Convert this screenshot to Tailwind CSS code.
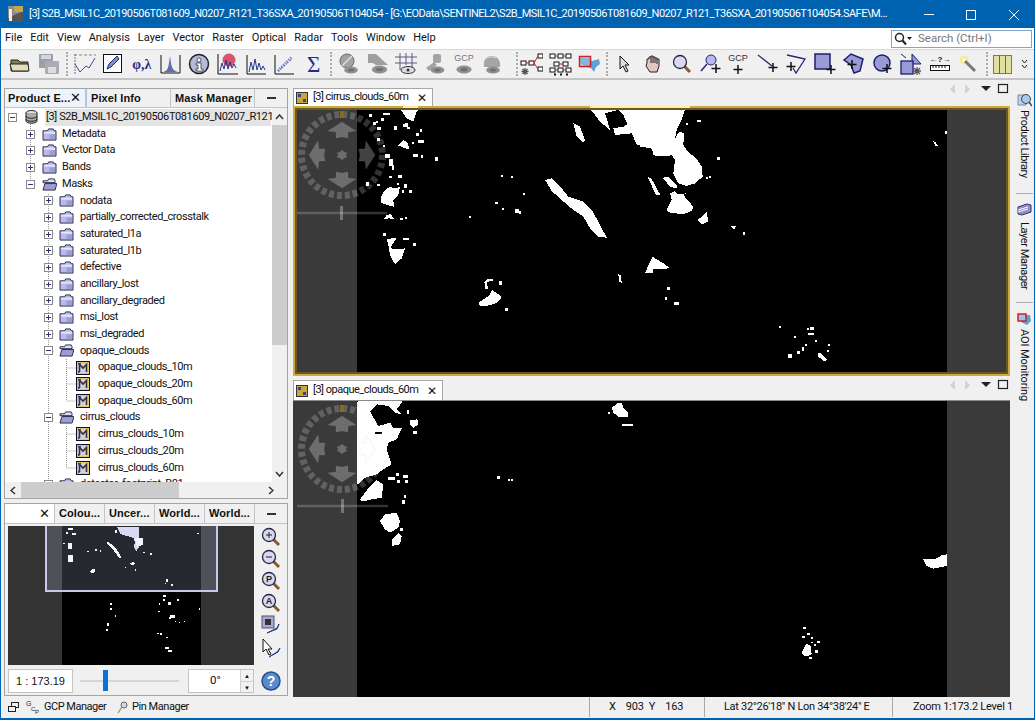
<!DOCTYPE html>
<html lang="en">
<head>
<meta charset="UTF-8">
<title>SNAP</title>
<script src="https://cdn.jsdelivr.net/npm/@tailwindcss/browser@4"></script>
</head>
<body class="bg-[#f0f0f0]">
<!-- shared icons -->
<svg class="hidden">
  <symbol id="folder" viewBox="0 0 16 14"><path d="M1 3h5l1-2h5l1 2h2v10H1z" fill="#b9b9ee" stroke="#25253f"/><path d="M2 4h12v2H2z" fill="#e6e6fa"/><path d="M8 7h6v5H8z" fill="#9d9dd4"/></symbol>
  <symbol id="folder-open" viewBox="0 0 16 14"><path d="M1 3h5l1-2h6l1 2v2H1z" fill="#dcdcf5" stroke="#25253f"/><path d="M3 6h13l-2 7H1z" fill="#9d9dd8" stroke="#25253f"/></symbol>
  <symbol id="mask" viewBox="0 0 14 14"><rect x=".5" y=".5" width="13" height="13" fill="#e8c76a" stroke="#111"/><rect x="2" y="2" width="10" height="10" fill="#cfd0e4"/><path d="M3.500 11V3.500L7 7l3.500-3.500V11" fill="none" stroke="#333" stroke-width="1.600"/><path d="M2 2h3v1.500H2zM2 10h1.500v2H2z" fill="#2b3a9c"/></symbol>
  <symbol id="plus" viewBox="0 0 9 9"><rect x=".5" y=".5" width="8" height="8" fill="#fff" stroke="#8a8a8a"/><path d="M2 4.500h5M4.500 2v5" stroke="#33337a"/></symbol>
  <symbol id="minus" viewBox="0 0 9 9"><rect x=".5" y=".5" width="8" height="8" fill="#fff" stroke="#8a8a8a"/><path d="M2 4.500h5" stroke="#33337a"/></symbol>
  <symbol id="eye" viewBox="0 0 18 10"><ellipse cx="9" cy="5" rx="8.500" ry="4.500" fill="#8f8f8f"/><ellipse cx="9" cy="5" rx="4" ry="2" fill="#6f6f6f"/></symbol>
  <symbol id="lens" viewBox="0 0 20 20"><path d="M12 12l6 6" stroke="#8a5a2a" stroke-width="3"/><circle cx="8" cy="8" r="6.500" fill="#d8d8ee" stroke="#26264a" stroke-width="1.300"/></symbol>
  <symbol id="nav" viewBox="-46 -46 92 92">
    <circle r="40.500" fill="none" stroke="#fff" stroke-opacity=".2" stroke-width="7" stroke-dasharray="5 2.950"/>
    <path d="M-2 -44h4v7h-4z" fill="#8a6d1c"/>
    <g fill="#fff" fill-opacity=".26" stroke="#aaa" stroke-opacity=".2" stroke-width=".6">
      <path d="M0-33L14-24 6-23V-17L0-18-6-17V-23L-14-24Z"/>
      <path d="M33 0L24 14 23 6H17L18 0 17-6H23L24-14Z"/>
      <path d="M0 33L14 24 6 23V17L0 18-6 17V23L-14 24Z"/>
      <path d="M-33 0L-24 14-23 6H-17L-18 0-17-6H-23L-24-14Z"/>
      <path d="M0-5L2-3 5-2 3.500 0 5 2 2 3 0 5-2 3-5 2-3.500 0-5-2-2-3Z"/>
    </g>
  </symbol>
</svg>

<div class="w-[1035px] h-[720px] flex flex-col overflow-hidden border-x border-b-2 border-[#0063b1] text-[#111] font-['Roboto',sans-serif] relative">

  <!-- title bar -->
  <header class="h-[28px] shrink-0 bg-[#0063b1] text-white flex items-center -mx-px">
    <svg class="ml-[8px] w-[15px] h-[16px]" viewBox="0 0 15 16"><rect width="15" height="16" fill="#555"/><path d="M0 0h15v5L0 12z" fill="#8c8c8c"/><path d="M6 0h9v6H6z" fill="#c9a64a"/><path d="M1 15V3h3v12z" fill="#eee"/></svg>
    <span class="ml-[6px] text-[11px] tracking-[-0.5px] whitespace-nowrap">[3] S2B_MSIL1C_20190506T081609_N0207_R121_T36SXA_20190506T104054 - [G:\EOData\SENTINEL2\S2B_MSIL1C_20190506T081609_N0207_R121_T36SXA_20190506T104054.SAFE\M...</span>
    <svg class="absolute left-[923px] top-[9px] w-[100px] h-[12px]" viewBox="0 0 100 12" fill="none" stroke="#fff"><path d="M0 5.500h10"/><rect x="42.500" y="1.500" width="9" height="9"/><path d="M85 1l10 10M95 1L85 11"/></svg>
  </header>

  <!-- menu bar -->
  <nav class="h-[22px] shrink-0 bg-white flex items-center pl-[4px] text-[11px] gap-[8px] border-b border-[#d8d8d8]">
    <span>File</span><span>Edit</span><span>View</span><span>Analysis</span><span>Layer</span><span>Vector</span><span>Raster</span><span>Optical</span><span>Radar</span><span>Tools</span><span>Window</span><span>Help</span>
    <div class="absolute left-[890px] top-[30px] w-[141px] h-[18px] border border-[#7ea6cc] bg-white flex items-center text-[11.5px] text-[#777]">
      <svg class="ml-[2px] w-[18px] h-[14px]" viewBox="0 0 18 14"><circle cx="5.500" cy="5.500" r="4" fill="#fff" stroke="#222" stroke-width="1.500"/><path d="M8.500 8.500l3.500 4" stroke="#222" stroke-width="2"/><path d="M13 5h5l-2.500 3z" fill="#222"/></svg>
      <span class="ml-[6px]">Search (Ctrl+I)</span>
    </div>
  </nav>

  <!-- tool bar -->
  <div class="h-[30px] shrink-0 flex items-center pl-[5px] border-b-2 border-[#c4c4c4] bg-[#f0f0f0]">
    <span class="w-[29px] flex justify-center"><svg class="w-[22px] h-[22px]" viewBox="0 0 22 22"><path d="M2 7h7l2 2h8v9H2z" fill="#8a7a55" stroke="#222"/><path d="M1 11h18l1 7H3z" fill="#e9dcb8" stroke="#222"/></svg></span>
    <span class="w-[29px] flex justify-center"><svg class="w-[22px] h-[22px]" viewBox="0 0 22 22"><rect x="1" y="1" width="14" height="14" rx="1" fill="#9aa0a8"/><rect x="3" y="2" width="10" height="4" fill="#d4d6da"/><rect x="7" y="8" width="14" height="13" rx="1" fill="#a9adb3"/><rect x="10" y="14" width="8" height="6" fill="#dcdde0"/></svg></span>
    <span class="w-[7px] h-[24px] flex justify-center"><i class="border-l-2 border-dotted border-[#aaa]"></i></span>
    <span class="w-[29px] flex justify-center"><svg class="w-[22px] h-[22px]" viewBox="0 0 22 22" fill="none"><path d="M0 2h22" stroke="#888" stroke-dasharray="3 2"/><path d="M1 1v20" stroke="#777" stroke-dasharray="2 1"/><path d="M1 11l5 8 6-6 3 2 6-10" stroke="#33558a"/></svg></span>
    <span class="w-[29px] flex justify-center"><svg class="w-[21px] h-[21px]" viewBox="0 0 21 21"><rect x=".5" y=".5" width="18" height="18" fill="#fff" stroke="#111"/><path d="M4 15l2-5 8-8 2 3-8 8z" fill="#7f8cc8" stroke="#1c2b7a"/></svg></span>
    <span class="w-[29px] text-center text-[#1f2f8c] text-[14px] font-bold font-['Liberation_Serif',serif]">φ,λ</span>
    <span class="w-[29px] flex justify-center"><svg class="w-[21px] h-[21px]" viewBox="0 0 21 21"><path d="M1 1v18h19M20 1v18" fill="none" stroke="#111"/><path d="M3 18c4-1 5-3 6-9l1-7 1 7c1 6 3 8 7 9z" fill="#5f6bb2"/></svg></span>
    <span class="w-[29px] flex justify-center"><svg class="w-[22px] h-[22px]" viewBox="0 0 22 22"><circle cx="11" cy="11" r="9.500" fill="#b7b9dc" stroke="#222" stroke-width="1.500"/><circle cx="11" cy="7" r="2" fill="#fff" stroke="#222" stroke-width=".7"/><path d="M8 10h5v6h2v2H8v-2h2v-4H8z" fill="#fff" stroke="#222" stroke-width=".7"/></svg></span>
    <span class="w-[29px] flex justify-center"><svg class="w-[22px] h-[22px]" viewBox="0 0 22 22"><circle cx="12" cy="7" r="6.500" fill="#d9566a"/><path d="M1 1v20h20" fill="none" stroke="#111"/><path d="M3 18l2-8 2 6 2-9 2 9 2-7 2 6 2-4 2 4" fill="none" stroke="#27358f"/></svg></span>
    <span class="w-[29px] flex justify-center"><svg class="w-[21px] h-[21px]" viewBox="0 0 21 21"><path d="M1 1v19h19" fill="none" stroke="#111"/><path d="M3 18l2-10 2 8 2-11 2 11 2-7 2 7 2-4 2 4" fill="none" stroke="#27358f"/></svg></span>
    <span class="w-[29px] flex justify-center"><svg class="w-[21px] h-[21px]" viewBox="0 0 21 21"><path d="M1 1v19h19" fill="none" stroke="#111"/><path d="M4 17L18 3" stroke="#7f8cc8" stroke-width="3" stroke-dasharray="1.500 1"/><path d="M4 17L18 5" stroke="#27358f" stroke-dasharray="1 3"/></svg></span>
    <span class="w-[29px] text-center text-[#1f2f8c] text-[23px] leading-none font-['Liberation_Serif',serif]">Σ</span>
    <span class="w-[7px] h-[24px] flex justify-center"><i class="border-l-2 border-dotted border-[#aaa]"></i></span>
    <span class="w-[29px] flex justify-center"><svg class="w-[22px] h-[22px]" viewBox="0 0 22 22"><circle cx="9" cy="8" r="7" fill="#a2a2a2" stroke="#666"/><path d="M4 13L14 3" stroke="#ddd" stroke-width="1.500"/><use href="#eye" x="5" y="13" width="16" height="8"/></svg></span>
    <span class="w-[29px] flex justify-center"><svg class="w-[22px] h-[22px]" viewBox="0 0 22 22"><path d="M1 1h8l12 11H9L6 10H1z" fill="#9e9e9e"/><use href="#eye" x="4" y="12" width="17" height="9"/></svg></span>
    <span class="w-[29px] flex justify-center"><svg class="w-[22px] h-[22px]" viewBox="0 0 22 22"><path d="M5 0v17M11 0v12M17 0v17M0 4h22M0 10h22" stroke="#5a5a82"/><ellipse cx="13" cy="17" rx="7" ry="3.500" fill="#ddd" stroke="#333"/><circle cx="13" cy="17" r="1.500" fill="#333"/></svg></span>
    <span class="w-[29px] flex justify-center"><svg class="w-[22px] h-[22px]" viewBox="0 0 22 22"><rect x="9" y="1" width="8" height="9" rx="2" fill="#a3a3a3"/><path d="M2 15l8-6 3 3-8 6z" fill="#a3a3a3"/><use href="#eye" x="6" y="13" width="15" height="8"/></svg></span>
    <span class="w-[29px] flex justify-center"><svg class="w-[24px] h-[24px]" viewBox="0 0 24 24"><text x="12" y="9" text-anchor="middle" font-size="9" fill="#777" font-family="Liberation Sans">GCP</text><use href="#eye" x="4" y="13" width="16" height="9"/></svg></span>
    <span class="w-[29px] flex justify-center"><svg class="w-[22px] h-[22px]" viewBox="0 0 22 22"><path d="M3 14c-1-8 3-11 8-11s9 4 8 11z" fill="#a5a5a5"/><path d="M5 6c2-2 5-3 10-1" fill="none" stroke="#dcdcdc"/><use href="#eye" x="4" y="13" width="16" height="8"/></svg></span>
    <span class="w-[7px] h-[24px] ml-[7px] mr-[-3px] flex justify-center"><i class="border-l-2 border-dotted border-[#aaa]"></i></span>
    <span class="w-[29px] flex justify-center"><svg class="w-[23px] h-[23px]" viewBox="0 0 23 23"><rect x="1" y="8" width="5" height="4" fill="#fff" stroke="#111"/><rect x="9" y="8" width="5" height="4" fill="#fff" stroke="#111"/><rect x="18" y="1" width="5" height="4" fill="#fff" stroke="#111"/><rect x="18" y="14" width="5" height="4" fill="#fff" stroke="#111"/><path d="M6 10h3M14 10l4-7M14 10l4 6" stroke="#c22" fill="none"/><path d="M5 15v7M1.500 18.500h7M2.500 16l5 5M7.500 16l-5 5" stroke="#555" stroke-width="1.300"/></svg></span>
    <span class="w-[29px] flex justify-center"><svg class="w-[23px] h-[23px]" viewBox="0 0 23 23" fill="#fff" stroke="#111"><rect x="1" y="1" width="5" height="4"/><rect x="9" y="1" width="5" height="4"/><rect x="17" y="1" width="5" height="4"/><rect x="5" y="9" width="5" height="4"/><rect x="14" y="9" width="5" height="4"/><rect x="1" y="15" width="5" height="4"/><rect x="9" y="15" width="5" height="4"/><rect x="17" y="15" width="5" height="4"/><path d="M6 3h3M14 3h3M10 11h4M6 17h3M14 17h3" stroke="#c22"/><path d="M5 21.500h2M11 21.500h2M17 21.500h2" stroke-width="2"/></svg></span>
    <span class="w-[29px] flex justify-center"><svg class="w-[23px] h-[20px]" viewBox="0 0 23 20"><path d="M2 4h8l4 3 7-2 1 5-4 3-2 5-3-4-5-1-5-3z" fill="#5aa2d8"/><rect x="1.500" y="2.500" width="11" height="10" fill="#9cc4e6" fill-opacity=".6" stroke="#cc2222" stroke-width="1.500"/></svg></span>
    <span class="w-[7px] h-[24px] flex justify-center"><i class="border-l-2 border-dotted border-[#aaa]"></i></span>
    <span class="w-[29px] flex justify-center"><svg class="w-[14px] h-[18px]" viewBox="0 0 14 18"><path d="M2 1v13l3-3 3 6 2-1-3-6h4z" fill="#ddd" stroke="#111"/></svg></span>
    <span class="w-[29px] flex justify-center"><svg class="w-[18px] h-[20px]" viewBox="0 0 18 20"><path d="M3 9V5h2V3h2V2h2v1h2v1h2v1h2v7l-2 6H6L2 12z" fill="#e0c8c0" stroke="#222"/><path d="M7 3v6M9 3v6M11 4v5M13 5v5" stroke="#222"/></svg></span>
    <span class="w-[29px] flex justify-center"><svg class="w-[20px] h-[20px]"><use href="#lens" width="20" height="20"/></svg></span>
    <span class="w-[29px] flex justify-center"><svg class="w-[22px] h-[20px]" viewBox="0 0 22 20"><circle cx="11" cy="6" r="5" fill="#b9b9ee" stroke="#26267a"/><path d="M7 10l-6 7" stroke="#26267a" stroke-width="1.500"/><path d="M16 10v9M11.500 14.500h9" stroke="#111" stroke-width="1.500"/></svg></span>
    <span class="w-[29px] flex justify-center"><svg class="w-[24px] h-[24px]" viewBox="0 0 24 24"><text x="11" y="9" text-anchor="middle" font-size="9" fill="#333" font-family="Liberation Sans">GCP</text><path d="M11 13v9M6.500 17.500h9" stroke="#111" stroke-width="1.500"/></svg></span>
    <span class="w-[29px] flex justify-center"><svg class="w-[22px] h-[20px]" viewBox="0 0 22 20"><path d="M1 1l14 11" stroke="#26267a" stroke-width="1.300"/><path d="M16 9v9M11.500 13.500h9" stroke="#111" stroke-width="1.500"/></svg></span>
    <span class="w-[29px] flex justify-center"><svg class="w-[22px] h-[22px]" viewBox="0 0 22 22" fill="none"><path d="M1 2l18 4-9 14-3-5" stroke="#26267a" stroke-width="1.300"/><path d="M5 9v9M.5 13.500h9" stroke="#111" stroke-width="1.500"/></svg></span>
    <span class="w-[29px] flex justify-center"><svg class="w-[22px] h-[22px]" viewBox="0 0 22 22"><rect x="1" y="1" width="15" height="15" fill="#9a9ad6" stroke="#1d1d70" stroke-width="1.500"/><path d="M17 12v9M12.500 16.500h9" stroke="#111" stroke-width="1.500"/></svg></span>
    <span class="w-[29px] flex justify-center"><svg class="w-[22px] h-[22px]" viewBox="0 0 22 22"><path d="M1 7l7-6 12 5-3 12-6 2-3-8z" fill="#9a9ad6" stroke="#1d1d70" stroke-width="1.500"/><path d="M9 7v9M4.500 11.500h9" stroke="#111" stroke-width="1.500"/></svg></span>
    <span class="w-[29px] flex justify-center"><svg class="w-[22px] h-[22px]" viewBox="0 0 22 22"><circle cx="10" cy="10" r="8" fill="#9a9ad6" stroke="#1d1d70" stroke-width="1.500"/><path d="M15 11v9M10.500 15.500h9" stroke="#111" stroke-width="1.500"/></svg></span>
    <span class="w-[29px] flex justify-center"><svg class="w-[23px] h-[23px]" viewBox="0 0 23 23"><path d="M12 1l9 10h-9z" fill="#9a9ad6" stroke="#1d1d70"/><rect x="1" y="8" width="12" height="13" fill="#9a9ad6" stroke="#1d1d70" stroke-width="1.300"/><path d="M1 1l5 4" stroke="#1d1d70"/><path d="M17 14v8M13 18h8M14 15l6 6M20 15l-6 6" stroke="#555" stroke-width="1.300"/></svg></span>
    <span class="w-[29px] flex justify-center"><svg class="w-[20px] h-[18px]" viewBox="0 0 20 18"><text x="10" y="7" text-anchor="middle" font-size="8" font-weight="700" fill="#111" font-family="Liberation Sans">←?→</text><rect x=".5" y="10.500" width="19" height="5" fill="#fff" stroke="#111"/><path d="M3 11v2M6 11v2M9 11v2M12 11v2M15 11v2" stroke="#111"/></svg></span>
    <span class="w-[29px] flex justify-center"><svg class="w-[18px] h-[18px]" viewBox="0 0 18 18"><circle cx="5" cy="5" r="4.500" fill="#f8ec9c"/><path d="M6 6l10 10" stroke="#777" stroke-width="3"/><circle cx="5" cy="5" r="1.500" fill="#fff"/></svg></span>
    <span class="w-[7px] h-[24px] ml-[1px] flex justify-center"><i class="border-l-2 border-dotted border-[#aaa]"></i></span>
    <span class="w-[24px] flex justify-center"><svg class="w-[19px] h-[19px]" viewBox="0 0 19 19"><rect x=".5" y=".5" width="18" height="18" fill="#e2e0a0" stroke="#777"/><path d="M6.500 0v19M12.500 0v19" stroke="#666"/></svg></span>
    <span class="w-[20px] flex justify-center"><svg class="w-[7px] h-[10px]" viewBox="0 0 7 10" fill="none" stroke="#222"><path d="M1 1l2.500 3L6 1M1 6l2.500 3L6 6"/></svg></span>
  </div>

  <!-- main -->
  <main class="flex-1 min-h-0 flex">

    <!-- left column -->
    <section class="w-[284px] ml-[3px] mt-[8px] flex flex-col gap-[4px] shrink-0">
      <div class="h-[411px] border border-[#a4a4a4] bg-white flex flex-col">
        <div class="h-[19px] shrink-0 flex bg-[#f0f0f0] text-[11px] font-bold font-['Liberation_Sans',sans-serif] tracking-[0.1px] whitespace-nowrap border-b border-[#c4c4c4]">
          <div class="w-[82px] flex items-center justify-between pl-[3px] pr-[5px] bg-[#eef4fa] border-r-2 border-[#a9c8e6]">Product E...<span class="font-normal text-[13px]">✕</span></div>
          <div class="w-[84px] flex items-center pl-[4px] border-r border-[#c4c4c4]">Pixel Info</div>
          <div class="w-[84px] flex items-center pl-[4px] border-r border-[#c4c4c4]">Mask Manager</div>
          <div class="flex-1 flex items-center justify-center"><i class="w-[9px] h-[2px] bg-[#333]"></i></div>
        </div>
        <div class="flex-1 min-h-0 flex flex-col">
          <div class="flex-1 min-h-0 flex">
            <div class="flex-1 min-w-0 overflow-hidden relative text-[11px] tracking-[-0.4px]">
              <!-- dotted tree lines -->
              <svg class="absolute left-0 top-[1px] w-[266px] h-[375px]" viewBox="0 0 266 375" fill="none" stroke="#999" stroke-dasharray="1 1">
                <path d="M25.500 15v60M25.500 25h6M25.500 42h6M25.500 58h6M25.500 75h6M43.500 85v290M43.500 92h6M43.500 109h6M43.500 125h6M43.500 142h6M43.500 159h6M43.500 175h6M43.500 192h6M43.500 209h6M43.500 225h6M43.500 242h6M43.500 309h6M61.500 250v42M61.500 259h9M61.500 275h9M61.500 292h9M61.500 317v42M61.500 325h9M61.500 342h9M61.500 359h9"/>
              </svg>
              <div class="relative flex flex-col pt-[1px]">
                <div class="h-[16.7px] flex items-center pl-[3px]"><svg class="w-[9px] h-[9px]"><use href="#minus"/></svg><svg class="ml-[8px] w-[13px] h-[14px]" viewBox="0 0 13 14"><ellipse cx="6.500" cy="3" rx="5.500" ry="2.500" fill="#ddd" stroke="#222"/><path d="M1 3v8c0 3 11 3 11 0V3" fill="#aaa" stroke="#222"/><path d="M1 6c0 3 11 3 11 0M1 9c0 3 11 3 11 0" fill="none" stroke="#222"/></svg><span class="ml-[7px] w-[226px] bg-[#e4e4e4] pl-[1px] whitespace-nowrap">[3] S2B_MSIL1C_20190506T081609_N0207_R121_</span></div>
                <div class="h-[16.7px] flex items-center pl-[21px]"><svg class="w-[9px] h-[9px]"><use href="#plus"/></svg><svg class="ml-[7px] w-[15px] h-[13px]"><use href="#folder"/></svg><span class="ml-[5px]">Metadata</span></div>
                <div class="h-[16.7px] flex items-center pl-[21px]"><svg class="w-[9px] h-[9px]"><use href="#plus"/></svg><svg class="ml-[7px] w-[15px] h-[13px]"><use href="#folder"/></svg><span class="ml-[5px]">Vector Data</span></div>
                <div class="h-[16.7px] flex items-center pl-[21px]"><svg class="w-[9px] h-[9px]"><use href="#plus"/></svg><svg class="ml-[7px] w-[15px] h-[13px]"><use href="#folder"/></svg><span class="ml-[5px]">Bands</span></div>
                <div class="h-[16.7px] flex items-center pl-[21px]"><svg class="w-[9px] h-[9px]"><use href="#minus"/></svg><svg class="ml-[7px] w-[15px] h-[13px]"><use href="#folder-open"/></svg><span class="ml-[5px]">Masks</span></div>
                <div class="h-[16.7px] flex items-center pl-[39px]"><svg class="w-[9px] h-[9px]"><use href="#plus"/></svg><svg class="ml-[6px] w-[15px] h-[13px]"><use href="#folder"/></svg><span class="ml-[6px]">nodata</span></div>
                <div class="h-[16.7px] flex items-center pl-[39px]"><svg class="w-[9px] h-[9px]"><use href="#plus"/></svg><svg class="ml-[6px] w-[15px] h-[13px]"><use href="#folder"/></svg><span class="ml-[6px]">partially_corrected_crosstalk</span></div>
                <div class="h-[16.7px] flex items-center pl-[39px]"><svg class="w-[9px] h-[9px]"><use href="#plus"/></svg><svg class="ml-[6px] w-[15px] h-[13px]"><use href="#folder"/></svg><span class="ml-[6px]">saturated_l1a</span></div>
                <div class="h-[16.7px] flex items-center pl-[39px]"><svg class="w-[9px] h-[9px]"><use href="#plus"/></svg><svg class="ml-[6px] w-[15px] h-[13px]"><use href="#folder"/></svg><span class="ml-[6px]">saturated_l1b</span></div>
                <div class="h-[16.7px] flex items-center pl-[39px]"><svg class="w-[9px] h-[9px]"><use href="#plus"/></svg><svg class="ml-[6px] w-[15px] h-[13px]"><use href="#folder"/></svg><span class="ml-[6px]">defective</span></div>
                <div class="h-[16.7px] flex items-center pl-[39px]"><svg class="w-[9px] h-[9px]"><use href="#plus"/></svg><svg class="ml-[6px] w-[15px] h-[13px]"><use href="#folder"/></svg><span class="ml-[6px]">ancillary_lost</span></div>
                <div class="h-[16.7px] flex items-center pl-[39px]"><svg class="w-[9px] h-[9px]"><use href="#plus"/></svg><svg class="ml-[6px] w-[15px] h-[13px]"><use href="#folder"/></svg><span class="ml-[6px]">ancillary_degraded</span></div>
                <div class="h-[16.7px] flex items-center pl-[39px]"><svg class="w-[9px] h-[9px]"><use href="#plus"/></svg><svg class="ml-[6px] w-[15px] h-[13px]"><use href="#folder"/></svg><span class="ml-[6px]">msi_lost</span></div>
                <div class="h-[16.7px] flex items-center pl-[39px]"><svg class="w-[9px] h-[9px]"><use href="#plus"/></svg><svg class="ml-[6px] w-[15px] h-[13px]"><use href="#folder"/></svg><span class="ml-[6px]">msi_degraded</span></div>
                <div class="h-[16.7px] flex items-center pl-[39px]"><svg class="w-[9px] h-[9px]"><use href="#minus"/></svg><svg class="ml-[6px] w-[15px] h-[13px]"><use href="#folder-open"/></svg><span class="ml-[6px]">opaque_clouds</span></div>
                <div class="h-[16.7px] flex items-center pl-[71px]"><svg class="w-[14px] h-[14px]"><use href="#mask"/></svg><span class="ml-[8px]">opaque_clouds_10m</span></div>
                <div class="h-[16.7px] flex items-center pl-[71px]"><svg class="w-[14px] h-[14px]"><use href="#mask"/></svg><span class="ml-[8px]">opaque_clouds_20m</span></div>
                <div class="h-[16.7px] flex items-center pl-[71px]"><svg class="w-[14px] h-[14px]"><use href="#mask"/></svg><span class="ml-[8px]">opaque_clouds_60m</span></div>
                <div class="h-[16.7px] flex items-center pl-[39px]"><svg class="w-[9px] h-[9px]"><use href="#minus"/></svg><svg class="ml-[6px] w-[15px] h-[13px]"><use href="#folder-open"/></svg><span class="ml-[6px]">cirrus_clouds</span></div>
                <div class="h-[16.7px] flex items-center pl-[71px]"><svg class="w-[14px] h-[14px]"><use href="#mask"/></svg><span class="ml-[8px]">cirrus_clouds_10m</span></div>
                <div class="h-[16.7px] flex items-center pl-[71px]"><svg class="w-[14px] h-[14px]"><use href="#mask"/></svg><span class="ml-[8px]">cirrus_clouds_20m</span></div>
                <div class="h-[16.7px] flex items-center pl-[71px]"><svg class="w-[14px] h-[14px]"><use href="#mask"/></svg><span class="ml-[8px]">cirrus_clouds_60m</span></div>
                <div class="h-[16.7px] flex items-center pl-[39px]"><svg class="w-[9px] h-[9px]"><use href="#plus"/></svg><svg class="ml-[6px] w-[15px] h-[13px]"><use href="#folder"/></svg><span class="ml-[6px]">detector_footprint_B01</span></div>
              </div>
            </div>
            <!-- vertical scrollbar -->
            <div class="w-[15px] shrink-0 bg-[#f0f0f0] flex flex-col">
              <div class="h-[17px] flex items-center justify-center"><svg class="w-[9px] h-[6px]" viewBox="0 0 9 6" fill="none" stroke="#333" stroke-width="1.500"><path d="M1 5l3.500-4L8 5"/></svg></div>
              <div class="h-[220px] bg-[#cdcdcd]"></div>
              <div class="flex-1"></div>
              <div class="h-[17px] flex items-center justify-center"><svg class="w-[9px] h-[6px]" viewBox="0 0 9 6" fill="none" stroke="#333" stroke-width="1.500"><path d="M1 1l3.500 4L8 1"/></svg></div>
            </div>
          </div>
          <!-- horizontal scrollbar -->
          <div class="h-[16px] shrink-0 bg-[#f0f0f0] flex items-center">
            <div class="w-[16px] flex justify-center"><svg class="w-[6px] h-[9px]" viewBox="0 0 6 9" fill="none" stroke="#333" stroke-width="1.500"><path d="M5 1L1 4.500 5 8"/></svg></div>
            <div class="w-[158px] h-full bg-[#cdcdcd]"></div>
            <div class="w-[89px]"></div>
            <div class="w-[6px]"><svg class="w-[6px] h-[9px] block" viewBox="0 0 6 9" fill="none" stroke="#333" stroke-width="1.500"><path d="M1 1l4 3.500L1 8"/></svg></div>
          </div>
        </div>
      </div>

      <div class="h-[195px] border border-[#a4a4a4] flex flex-col bg-[#f0f0f0]">
        <div class="h-[20px] shrink-0 flex text-[11px] font-bold font-['Liberation_Sans',sans-serif] tracking-[0.1px] whitespace-nowrap border-b border-[#c4c4c4]">
          <div class="w-[49px] bg-white flex items-center justify-end pr-[4px] font-normal text-[13px]">✕</div>
          <div class="w-[50px] flex items-center pl-[4px] border-l border-[#c4c4c4]">Colou...</div>
          <div class="w-[50px] flex items-center pl-[4px] border-l border-[#c4c4c4]">Uncer...</div>
          <div class="w-[50px] flex items-center pl-[4px] border-l border-[#c4c4c4]">World...</div>
          <div class="w-[51px] flex items-center pl-[4px] border-x border-[#c4c4c4]">World...</div>
          <div class="flex-1 flex items-center justify-center"><i class="w-[9px] h-[2px] bg-[#333]"></i></div>
        </div>
        <div class="flex-1 flex">
          <div class="w-[250px] pl-[3px] pt-[1px] flex flex-col">
            <!-- navigator preview -->
            <svg class="w-[246px] h-[139px] mt-[1px] block" viewBox="25 78 738 417" shape-rendering="crispEdges">
              <rect x="25" y="78" width="738" height="417" fill="#333"/>
              <rect x="186" y="78" width="417" height="417" fill="#000"/>
              <g fill="#fff">
                <path d="M200 95h6v6h-6zM216 100h12v6h-12zM205 85h15v6h-15zM190 128h5v5h-5zM205 130h12v16h-12zM205 165h15v22h-15zM262 152h6v5h-6zM285 148h6v5h-6zM300 150h5v5h-5zM345 90h6v10h-6zM375 200h5v5h-5zM405 208h5v5h-5zM450 160h6v5h-6zM430 155h5v5h-5zM592 98h6v5h-6z"/>
                <path d="M320 128l6-3 25 22 14 25-6 2-15-20z"/>
                <path d="M352 82h65v60l-8 12-8-20 6-5-5-15-40-12z" fill="#dcdcf4"/>
                <path d="M405 115h25v20l-18 5z"/>
                <path d="M272 215l8-10 8 5-4 8-8 2zM390 192l10-8 8 8-10 3z"/>
                <path d="M500 238h5v8h-5zM495 248h5v5h-5zM513 252h6v5h-6z"/>
                <path d="M490 285h8v5h-8zM478 310h4v5h-4zM490 298h6v5h-6zM505 305h10v10h-10zM532 298h5v5h-5zM475 332h5v5h-5zM510 345h16v8h-16zM508 352h6v6h-6zM525 362h4v4h-4zM538 365h4v4h-4zM553 362h4v4h-4zM597 325h5v5h-5zM332 310h5v5h-5zM332 325h4v4h-4zM345 345h5v5h-5zM322 370h5v8h-5zM320 388h5v5h-5zM472 398h5v5h-5zM482 400h4v4h-4zM498 410h6v5h-6zM495 440h14v8h-14zM505 450h12v6h-12z"/>
              </g>
              <rect x="136" y="78" width="517" height="195" fill="#c8c8f0" fill-opacity=".2"/>
              <path d="M138 78v195h514V78" fill="none" stroke="#c8c8ee" stroke-width="5"/>
            </svg>
            <div class="flex items-center mt-[4px] h-[24px]">
              <div class="w-[65px] h-[24px] bg-white border border-[#c4c4c4] flex items-center justify-center text-[11px] font-['Liberation_Sans',sans-serif]">1 : 173.19</div>
              <div class="w-[99px] ml-[7px] h-[2px] bg-[#d6d6d6] relative"><i class="absolute left-[23px] top-[-10px] w-[5px] h-[21px] bg-[#0a73d6]"></i></div>
              <div class="w-[66px] ml-[9px] h-[24px] bg-white border border-[#c4c4c4] flex items-center text-[11.500px]">
                <span class="flex-1 text-center pl-[2px]">0°</span>
                <div class="w-[13px] h-full border-l border-[#d0d0d0] bg-[#f2f2f2] flex flex-col text-[6px] leading-[11px] text-center"><span class="flex-1 border-b border-[#d0d0d0]">▲</span><span class="flex-1">▼</span></div>
              </div>
            </div>
          </div>
          <div class="w-[32px] flex flex-col items-center pt-[3px]">
            <svg class="w-[20px] h-[20px] mb-[2px]" viewBox="0 0 20 20"><use href="#lens" width="20" height="20"/><path d="M5 8h6M8 5v6" stroke="#222"/></svg>
            <svg class="w-[20px] h-[20px] mb-[2px]" viewBox="0 0 20 20"><use href="#lens" width="20" height="20"/><path d="M5 8h6" stroke="#222"/></svg>
            <svg class="w-[20px] h-[20px] mb-[2px]" viewBox="0 0 20 20"><use href="#lens" width="20" height="20"/><text x="8" y="11" font-size="9" font-weight="700" text-anchor="middle" fill="#222" font-family="Liberation Sans">P</text></svg>
            <svg class="w-[20px] h-[20px] mb-[2px]" viewBox="0 0 20 20"><use href="#lens" width="20" height="20"/><text x="8" y="11" font-size="9" font-weight="700" text-anchor="middle" fill="#222" font-family="Liberation Sans">A</text></svg>
            <svg class="w-[20px] h-[20px] mb-[3px]" viewBox="0 0 20 20"><rect x="1" y="1" width="12" height="12" fill="#a8a8dc" stroke="#555"/><rect x="4" y="4" width="6" height="6" fill="#333"/><path d="M6 18l10-5 2-4-2 5z" fill="#4b5cc8" stroke="#2a3a9a"/></svg>
            <svg class="w-[20px] h-[20px]" viewBox="0 0 20 20"><path d="M2 1v13l3-3 3 6 2-1-3-5h4z" fill="#fff" stroke="#111"/><path d="M8 19l9-5 2-4-3 4z" fill="#4b5cc8" stroke="#2a3a9a"/></svg>
            <svg class="w-[20px] h-[20px] mt-[13px]" viewBox="0 0 20 20"><circle cx="10" cy="10" r="9" fill="#5a8ccc" stroke="#234f90" stroke-width="1.500"/><text x="10" y="15" text-anchor="middle" font-size="14" font-weight="700" fill="#fff" font-family="Liberation Sans">?</text></svg>
          </div>
        </div>
      </div>
    </section>

    <!-- image views -->
    <section class="w-[717px] ml-[5px] shrink-0 flex flex-col">
      <div class="h-[26px] shrink-0 flex items-end relative">
        <div class="w-[140px] h-[18px] bg-white border border-b-0 border-[#a8a8a8] flex items-center pl-[2px] pr-[5px] text-[11px]">
          <svg class="w-[12px] h-[12px] shrink-0" viewBox="0 0 12 12"><rect x=".5" y=".5" width="11" height="11" fill="#c8a63a" stroke="#333"/><path d="M2 2h3v3H2zM7 7h3v3H7z" fill="#3a3f9a"/></svg>
          <span class="ml-[5px] flex-1 whitespace-nowrap tracking-[-0.55px]">[3] cirrus_clouds_60m</span><span class="text-[12px]">✕</span>
        </div>
        <svg class="absolute right-[1px] top-[3px] w-[60px] h-[12px]" viewBox="0 0 60 12"><path d="M6 1L1 6l5 5zM16 1l5 5-5 5z" fill="#d2d2d2"/><path d="M32 3h10l-5 5z" fill="#222"/><rect x="49.500" y="1.500" width="9" height="8" fill="none" stroke="#222" stroke-width="1.200"/></svg>
      </div>

      <div class="h-[270px] shrink-0 border-2 border-[#cdaa40] bg-black relative">
        <i class="absolute left-[108px] top-[-2px] w-[15px] h-[4px] bg-[#ffeea8]"></i>
        <i class="absolute left-[295px] top-[-2px] w-[100px] h-[4px] bg-[#ffeea8]"></i>
        <div class="w-full h-full border-2 border-[#6b5722] relative">
          <svg class="w-[709px] h-[262px] block" viewBox="297 110 709 262">
            <rect x="297" y="110" width="60" height="262" fill="#3a3a3a"/>
            <rect x="947" y="110" width="59" height="262" fill="#3a3a3a"/>
            <g shape-rendering="crispEdges" fill="#fff">
              <!-- western clouds -->
              <g transform="translate(290 85) scale(.3334)">
                <path d="M238 88h8v8h-8zM272 100h9v9h-9zM280 85h20v6h-20zM250 112h8v8h-8zM262 125h10v10h-10zM258 108h6v6h-6zM312 122h9v12h-9zM340 118h8v8h-8zM352 125h8v8h-8zM378 145h8v8h-8zM390 132h6v8h-6zM262 160h8v8h-8zM278 180h6v6h-6zM285 208h15v12h-15zM298 222h10v20h-10zM305 240h8v14h-8zM298 272h8v8h-8zM325 270h10v8h-10zM228 292h10v10h-10zM262 296h8v8h-8zM320 293h8v8h-8zM342 298h10v10h-10zM356 316h9v9h-9zM335 315h8v8h-8zM330 398h8v6h-8zM345 396h6v6h-6zM345 115h10v10h-10zM370 206h14v11h-14zM392 210h8v8h-8zM365 170h6v6h-6zM385 165h18v10h-18zM435 215h8v12h-8zM632 270h6v6h-6zM662 273h6v6h-6zM700 323h4v6h-4zM614 350h10v8h-10zM637 368h5v6h-5zM676 372h10v12h-10zM686 378h8v8h-8zM536 393h6v6h-6zM278 443h9v9h-9zM338 458h18v8h-18zM368 474h9v9h-9z"/>
                <path d="M275 330l10-15 15-10 15 5 15-5-5 25-15 15 2 20-22-5-18-8zM280 403l10-13 12-3 10 15-17-2zM330 72h55l-7 13-8 25-20-10-10-15zM322 182l18-17 12 7 6 20-13-2-10-5zM765 285l20-5 30 30 20 25 45 15 25 25 20 35 25 48-25-3-25-25-20-35-30-20-35-30-30-27zM850 115l20 10 15 40-7 7-18-17zM290 462l30-4-20 32 25 2 20-2-10 30-20 18-15-28-5-30z"/>
                <path d="M900 72h240v140h-45l-15-27-40-5-15-35-50 5-5-20 30-5 12-7-12-28-15-15-40 10 15 50-30-25-15-20z"/>
              </g>
              <!-- big cloud and the streaks to the east -->
              <g transform="translate(640 105) scale(.3334)">
                <path d="M0 15h135l-10 30-15 30-5 25 13-20 14 5-2 35 10 15 32 30 13 20 3 30-23 20-25 8-25-8-15-30 5-40-10-15H40l-2-20-38-5z"/>
                <path d="M172 46h10v6h-10zM137 54h7v7h-7zM232 157h7v7h-7zM197 215h8v8h-8zM208 212h6v6h-6zM915 78h7v10h-7zM310 382h4v8h-4z"/>
                <path d="M22 215l13 7 10 18 15 28-10 4-12-22-8-20zM68 218l17-3 25 25v10l-20-5zM80 315l15-30-5-20 15-7 7 10 28-3-10 5 30 35-5 13-25 10-45-6zM172 345l13-10 15-13 5 28-20 8zM272 362h18l-8 11zM878 108l7 2 8 12-5 3z"/>
              </g>
              <g transform="translate(460 240) scale(.3334)">
                <path d="M116 122h10v12h-10zM135 203h10v9h-10zM622 142h8v8h-8zM616 172h5v8h-5zM642 187h14v8h-14zM956 259h6v6h-6zM1040 265h8v6h-8zM1050 262h12v8h-12zM1045 278h16v8h-16zM1002 288h6v5h-6zM1066 300h6v6h-6zM1103 313h6v6h-6zM1100 331h6v6h-6zM1036 312h4v6h-4zM1026 322h5v10h-5zM1010 332h10v10h-10zM985 342h10v12h-10z"/>
                <path d="M100 116H82l-9 10 3 22h8l-3-20 8-6h11zM55 188l15-10 20-13 5-15 25 15 5 10-17 15-28 8-20 0zM475 103l7 2 3 23-8-3zM555 100l10-25 13-25 7 5 25 15 20 15-50 3-2 12zM1072 338h8l20 20-5 7-20-15z"/>
              </g>
            </g>
          </svg>
          <svg class="absolute left-0 top-0 w-[92px] h-[120px]" viewBox="0 0 92 120">
            <use href="#nav" x="-1" y="-1" width="92" height="92"/>
            <path d="M0 103h90" stroke="#fff" stroke-opacity=".2" stroke-width="2.500"/>
            <rect x="43" y="96" width="3" height="14" fill="#fff" fill-opacity=".3"/>
          </svg>
        </div>
      </div>

      <div class="h-[24px] shrink-0 flex items-end relative">
        <div class="w-[150px] h-[20px] bg-white border border-b-0 border-[#a8a8a8] flex items-center pl-[2px] pr-[5px] text-[11px]">
          <svg class="w-[12px] h-[12px] shrink-0" viewBox="0 0 12 12"><rect x=".5" y=".5" width="11" height="11" fill="#c8a63a" stroke="#333"/><path d="M2 2h3v3H2zM7 7h3v3H7z" fill="#3a3f9a"/></svg>
          <span class="ml-[5px] flex-1 whitespace-nowrap tracking-[-0.5px]">[3] opaque_clouds_60m</span><span class="text-[12px]">✕</span>
        </div>
        <svg class="absolute right-[1px] top-[3px] w-[60px] h-[12px]" viewBox="0 0 60 12"><path d="M6 1L1 6l5 5zM16 1l5 5-5 5z" fill="#d2d2d2"/><path d="M32 3h10l-5 5z" fill="#222"/><rect x="49.500" y="1.500" width="9" height="8" fill="none" stroke="#222" stroke-width="1.200"/></svg>
      </div>

      <div class="h-[297px] shrink-0 bg-black relative border-t border-[#8a8a8a]">
        <svg class="w-[717px] h-[296px] block" viewBox="293 400 717 296">
          <rect x="293" y="400" width="64" height="296" fill="#3a3a3a"/>
          <rect x="947" y="400" width="63" height="296" fill="#3a3a3a"/>
          <g shape-rendering="crispEdges" fill="#fff">
            <g transform="translate(290 370) scale(.3334)">
              <path d="M200 92l25-4h115l-20 27 15 15-20-5-20-20-35-5-20 20 5 10 20 35 35-10 10 17h25l-15 33-25 10-5 20 15 45-25 15-20 15-35 10-20 20h-5z"/>
              <path d="M360 148l22-3 3 15-15 10-10-10zM370 180h10v10h-10zM350 118h8v10h-8zM295 318h20v10h-20zM318 306h8v8h-8zM338 312h16v8h-16zM322 328h8v8h-8zM345 328h8v8h-8zM335 388h10v10h-10zM342 372h6v8h-6zM330 472h8v8h-8zM622 316h8v8h-8zM655 324h6v6h-6zM663 324h6v6h-6z"/>
              <path d="M210 385l30-40 20-17 20 12-5 40-30 5-30 7zM270 450l15-20 35-5 10 25-5 20-25 15-15-10zM325 485l10 10-5 25-25 5v-20z"/>
              <path d="M255 182h20v8h-20z" fill="#000"/>
            </g>
            <g transform="translate(600 395) scale(.3334)">
              <path d="M35 35l20-15h10l5 15 15 15v12H55L40 50zM970 490h35l20-12 15-3v35l-40 8-20-8zM605 768l15-26 12 8 3 25-10 5-15-2z"/>
              <path d="M25 48h5v5h-5zM65 85h35v5H65zM608 693h10v7h-10zM620 710h10v7h-10zM606 720h10v6h-10zM632 722h8v8h-8zM632 738h6v4h-6zM652 735h8v6h-8zM642 745h6v6h-6zM645 762h8v8h-8zM627 784h8v6h-8z"/>
            </g>
          </g>
        </svg>
        <svg class="absolute left-[4px] top-[2px] w-[92px] h-[120px]" viewBox="0 0 92 120">
          <use href="#nav" x="-1" y="0" width="92" height="92"/>
          <path d="M0 103h91" stroke="#fff" stroke-opacity=".2" stroke-width="2.500"/>
          <rect x="44" y="96" width="3" height="14" fill="#fff" fill-opacity=".3"/>
        </svg>
      </div>
    </section>

    <!-- right tool strip -->
    <aside class="w-[22px] ml-[3px] shrink-0 flex flex-col items-center pt-[12px] text-[11px]">
      <svg class="w-[15px] h-[15px] shrink-0" viewBox="0 0 15 15"><path d="M1 3h8v10H1z" fill="#bcd0ea" stroke="#7a8aa5"/><circle cx="9" cy="7" r="4.500" fill="#a9c8ea" stroke="#444"/><path d="M12 10l3 4" stroke="#444" stroke-width="1.500"/></svg>
      <span class="mt-[3px] h-[67px] [writing-mode:vertical-rl] whitespace-nowrap tracking-[-0.45px]">Product Library</span>
      <i class="w-[17px] h-[1px] bg-[#b0b0b0] mt-[16px]"></i>
      <svg class="w-[15px] h-[13px] mt-[9px] shrink-0" viewBox="0 0 15 13"><path d="M1 4l9-3 4 1v7l-9 3-4-1z" fill="#8e8ec8" stroke="#33336e"/><path d="M1 7l10-3M1 9l10-3" stroke="#fff"/></svg>
      <span class="mt-[6px] h-[65px] [writing-mode:vertical-rl] whitespace-nowrap tracking-[-0.4px]">Layer Manager</span>
      <i class="w-[17px] h-[1px] bg-[#b0b0b0] mt-[15px]"></i>
      <svg class="w-[15px] h-[13px] mt-[10px] shrink-0" viewBox="0 0 15 13"><path d="M4 2h9l1 6-4 4-6-3z" fill="#5aa2d8"/><rect x="1" y="1" width="8" height="7" fill="#9cc4e6" stroke="#cc2222" stroke-width="1.500"/></svg>
      <span class="mt-[3px] [writing-mode:vertical-rl] whitespace-nowrap tracking-[-0.1px]">AOI Monitoring</span>
    </aside>
  </main>

  <!-- status bar -->
  <footer class="h-[22px] shrink-0 flex items-center text-[11px] bg-[#f0f0f0]">
    <svg class="ml-[6px] w-[13px] h-[12px]" viewBox="0 0 13 12" fill="none" stroke="#222"><rect x="4.500" y="1.500" width="7" height="5"/><rect x="1.500" y="5.500" width="7" height="5" fill="#f0f0f0"/></svg>
    <svg class="ml-[6px] w-[14px] h-[14px]" viewBox="0 0 14 14"><text x="0" y="6" font-size="7" fill="#222" font-family="Liberation Sans">G</text><text x="5" y="11" font-size="6" fill="#222" font-family="Liberation Sans">C</text><text x="9" y="14" font-size="6" fill="#222" font-family="Liberation Sans">P</text></svg>
    <span class="ml-[4px] w-[60px] tracking-[-0.5px] whitespace-nowrap">GCP Manager</span>
    <svg class="ml-[13px] w-[11px] h-[13px]" viewBox="0 0 11 13"><circle cx="7" cy="4" r="3" fill="#cfd8e8" stroke="#666"/><path d="M5 6L1 12" stroke="#b08a50" stroke-width="1.300"/></svg>
    <span class="ml-[4px] tracking-[-0.45px] whitespace-nowrap">Pin Manager</span>
    <div class="ml-auto h-[20px] flex items-center w-[445px]">
      <div class="w-[115px] h-full border-l border-[#a8a8a8] flex items-center pl-[19px] whitespace-pre tracking-[-0.2px]">X    903  Y    163</div>
      <div class="w-[188px] h-full border-l border-[#a8a8a8] flex items-center pl-[19px] whitespace-nowrap tracking-[-0.3px]">Lat 32°26'18" N  Lon 34°38'24" E</div>
      <div class="flex-1 h-full border-l border-[#a8a8a8] flex items-center pl-[20px] whitespace-nowrap tracking-[-0.25px]">Zoom 1:173.2  Level 1</div>
    </div>
  </footer>
</div>
</body>
</html>
